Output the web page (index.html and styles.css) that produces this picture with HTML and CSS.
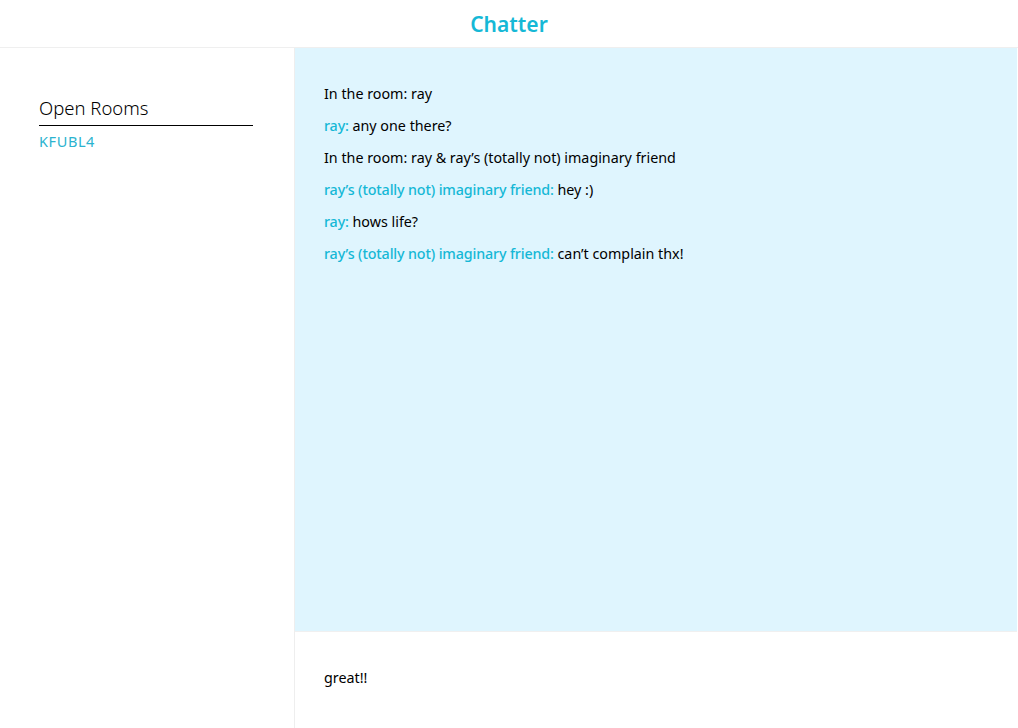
FILE: index.html
```html
<!DOCTYPE html>
<html>
<head>
<meta charset="utf-8">
<link rel="stylesheet" href="styles.css">
</head>
<body>
<header class="topbar"><h1 class="brand">Chatter</h1></header>
<div class="layout">
  <aside class="sidebar">
    <h2 class="rooms-title">Open Rooms</h2>
    <a class="room-link">KFUBL4</a>
  </aside>
  <main class="main">
    <section class="messages">
      <p class="msg">In the room: ray</p>
      <p class="msg"><span class="who">ray:</span> any one there?</p>
      <p class="msg">In the room: ray &amp; ray’s (totally not) imaginary friend</p>
      <p class="msg"><span class="who">ray’s (totally not) imaginary friend:</span> hey :)</p>
      <p class="msg"><span class="who">ray:</span> hows life?</p>
      <p class="msg"><span class="who">ray’s (totally not) imaginary friend:</span> can’t complain thx!</p>
    </section>
    <section class="composer">
      <div class="input">great!!</div>
    </section>
  </main>
</div>
</body>
</html>
```
FILE: styles.css
```css
* { box-sizing: border-box; }
html, body { margin: 0; padding: 0; height: 100%; }
body {
  font-family: "Noto Sans", "Open Sans", sans-serif;
  color: #000;
  background: #fff;
  display: flex;
  flex-direction: column;
  overflow: hidden;
}
.topbar {
  height: 48px;
  border-bottom: 1px solid #efefef;
  display: flex;
  align-items: center;
  justify-content: center;
}
.brand {
  margin: 0;
  font-size: 21px;
  font-weight: 600;
  color: #15b8d6;
}
.layout {
  flex: 1;
  display: grid;
  grid-template-columns: 295px 1fr;
  min-height: 0;
}
.sidebar {
  border-right: 1px solid #eeeeee;
  padding: 45px 0 0 39px;
}
.rooms-title {
  margin: 0;
  width: 214px;
  font-size: 18.5px;
  font-weight: 300;
  line-height: 30px;
  padding-bottom: 2px;
  border-bottom: 1px solid #000;
}
.room-link {
  display: block;
  margin-top: 5px;
  font-size: 14.5px;
  color: #2bb3cf;
  letter-spacing: 0.6px;
}
.main {
  display: flex;
  flex-direction: column;
  margin-right: 1px;
}
.messages {
  height: 584px;
  background: #dff5fe;
  padding: 30px 29px;
  border-bottom: 1px solid #f0f0f0;
}
.msg {
  margin: 0;
  font-size: 14.3px;
  line-height: 32px;
}
.who {
  color: #15b8d6;
  font-weight: 500;
  letter-spacing: -0.15px;
}
.composer {
  flex: 1;
  display: flex;
  align-items: center;
  padding: 0 29px;
}
.input {
  font-size: 14.3px;
  margin-top: -6px;
}
```
